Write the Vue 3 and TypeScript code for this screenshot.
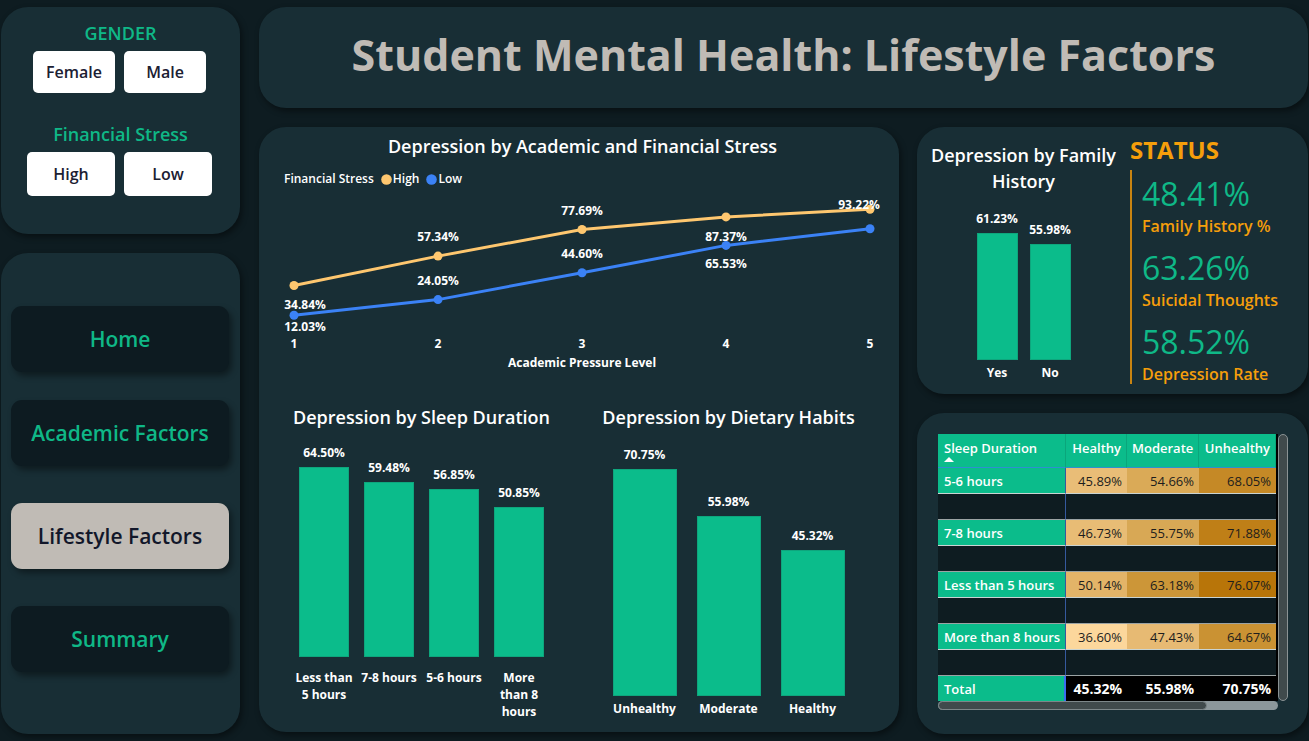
<script setup lang="ts">
interface Bar {
  label: string
  value: number
}

interface Point {
  level: number
  value: number
  label?: string
  dx?: number
  dy?: number
}

interface Series {
  name: string
  color: string
  points: Point[]
}

const genders = ['Female', 'Male']
const stressLevels = ['High', 'Low']

const pages = [
  { name: 'Home', active: false },
  { name: 'Academic Factors', active: false },
  { name: 'Lifestyle Factors', active: true },
  { name: 'Summary', active: false },
]

const series: Series[] = [
  {
    name: 'High',
    color: '#fec76f',
    points: [
      { level: 1, value: 34.84, label: '34.84%', dx: 11, dy: 23 },
      { level: 2, value: 57.34, label: '57.34%', dy: -15 },
      { level: 3, value: 77.69, label: '77.69%', dy: -15 },
      { level: 4, value: 87.37, label: '87.37%', dy: 24 },
      { level: 5, value: 93.22, label: '93.22%', dx: -11, dy: 0 },
    ],
  },
  {
    name: 'Low',
    color: '#3b82f6',
    points: [
      { level: 1, value: 12.03, label: '12.03%', dx: 11, dy: 16 },
      { level: 2, value: 24.05, label: '24.05%', dy: -15 },
      { level: 3, value: 44.6, label: '44.60%', dy: -15 },
      { level: 4, value: 65.53, label: '65.53%', dy: 23 },
      { level: 5, value: 78.3 },
    ],
  },
]

const levels = [1, 2, 3, 4, 5]
const px = (level: number) => 35 + (level - 1) * 144
const py = (value: number) => Math.round((141 - value * 1.306) * 10) / 10
const linePoints = (s: Series) => s.points.map((p) => `${px(p.level)},${py(p.value)}`).join(' ')

const sleep: Bar[] = [
  { label: 'Less than 5 hours', value: 64.5 },
  { label: '7-8 hours', value: 59.48 },
  { label: '5-6 hours', value: 56.85 },
  { label: 'More than 8 hours', value: 50.85 },
]
const diet: Bar[] = [
  { label: 'Unhealthy', value: 70.75 },
  { label: 'Moderate', value: 55.98 },
  { label: 'Healthy', value: 45.32 },
]
const family: Bar[] = [
  { label: 'Yes', value: 61.23 },
  { label: 'No', value: 55.98 },
]

const barHeight = (value: number, scale: number) => ({ height: `${Math.round(value * scale)}px` })
const pct = (value: number) => `${value.toFixed(2)}%`

const status = [
  { value: 48.41, label: 'Family History %' },
  { value: 63.26, label: 'Suicidal Thoughts' },
  { value: 58.52, label: 'Depression Rate' },
]

const rows = [
  { label: '5-6 hours', cells: [45.89, 54.66, 68.05], colors: ['#e9bd77', '#daaa57', '#c58926'] },
  { label: '7-8 hours', cells: [46.73, 55.75, 71.88], colors: ['#e8bc75', '#d8a855', '#bf7f17'] },
  { label: 'Less than 5 hours', cells: [50.14, 63.18, 76.07], colors: ['#e3b468', '#cc9638', '#b87509'] },
  { label: 'More than 8 hours', cells: [36.6, 47.43, 64.67], colors: ['#fcd79c', '#e7ba73', '#ca9233'] },
]
const totals = [45.32, 55.98, 70.75]
</script>

<template>
  <div class="dashboard">
    <aside class="sidebar">
      <section class="card filters">
        <div class="filter" role="group" aria-labelledby="gender-label">
          <h2 id="gender-label">GENDER</h2>
          <div class="options">
            <button v-for="g in genders" :key="g" type="button">{{ g }}</button>
          </div>
        </div>
        <div class="filter wide" role="group" aria-labelledby="stress-label">
          <h2 id="stress-label">Financial Stress</h2>
          <div class="options">
            <button v-for="s in stressLevels" :key="s" type="button">{{ s }}</button>
          </div>
        </div>
      </section>
      <nav class="card nav">
        <a v-for="p in pages" :key="p.name" href="#" :class="{ active: p.active }">{{ p.name }}</a>
      </nav>
    </aside>

    <main class="content">
      <header class="card banner">
        <h1>Student Mental Health: Lifestyle Factors</h1>
      </header>

      <div class="panels">
        <section class="card charts">
          <h3>Depression by Academic and Financial Stress</h3>
          <div class="legend">
            <span class="legend-title">Financial Stress</span>
            <span v-for="s in series" :key="s.name" class="legend-item">
              <svg width="11" height="11" viewBox="0 0 11 11">
                <circle cx="5.5" cy="5.5" r="5.3" :fill="s.color" />
              </svg>
              {{ s.name }}
            </span>
          </div>
          <svg class="line-chart" viewBox="0 0 640 184">
            <g v-for="s in series" :key="s.name">
              <polyline :points="linePoints(s)" fill="none" :stroke="s.color" stroke-width="3" stroke-linejoin="round" />
              <circle v-for="p in s.points" :key="p.level" :cx="px(p.level)" :cy="py(p.value)" r="4.5" :fill="s.color" />
            </g>
            <g v-for="s in series" :key="s.name">
              <template v-for="p in s.points" :key="p.level">
                <text v-if="p.label" :x="px(p.level) + (p.dx ?? 0)" :y="py(p.value) + (p.dy ?? 0)">{{ p.label }}</text>
              </template>
            </g>
            <text v-for="l in levels" :key="l" :x="px(l)" y="158">{{ l }}</text>
            <text x="323" y="177">Academic Pressure Level</text>
          </svg>

          <div class="bar-row">
            <figure class="sleep">
              <figcaption>Depression by Sleep Duration</figcaption>
              <div class="bars">
                <div v-for="b in sleep" :key="b.label" class="bar-col">
                  <span class="value">{{ pct(b.value) }}</span>
                  <div class="bar" :style="barHeight(b.value, 2.947)"></div>
                  <span class="category">{{ b.label }}</span>
                </div>
              </div>
            </figure>
            <figure class="diet">
              <figcaption>Depression by Dietary Habits</figcaption>
              <div class="bars">
                <div v-for="b in diet" :key="b.label" class="bar-col">
                  <span class="value">{{ pct(b.value) }}</span>
                  <div class="bar" :style="barHeight(b.value, 3.215)"></div>
                  <span class="category">{{ b.label }}</span>
                </div>
              </div>
            </figure>
          </div>
        </section>

        <div class="right">
          <section class="card summary">
            <figure class="family">
              <figcaption>Depression by Family History</figcaption>
              <div class="bars">
                <div v-for="b in family" :key="b.label" class="bar-col">
                  <span class="value">{{ pct(b.value) }}</span>
                  <div class="bar" :style="barHeight(b.value, 2.07)"></div>
                  <span class="category">{{ b.label }}</span>
                </div>
              </div>
            </figure>
            <div class="status">
              <h2>STATUS</h2>
              <dl>
                <div v-for="k in status" :key="k.label" class="kpi">
                  <dd>{{ pct(k.value) }}</dd>
                  <dt>{{ k.label }}</dt>
                </div>
              </dl>
            </div>
          </section>

          <section class="card matrix">
            <div class="matrix-grid">
              <table>
                <colgroup>
                  <col class="c-label" />
                  <col class="c-healthy" />
                  <col class="c-moderate" />
                  <col />
                </colgroup>
                <thead>
                  <tr>
                    <th scope="col">
                      Sleep Duration
                      <svg width="10" height="5" viewBox="0 0 10 5"><path d="M0 5L5 0L10 5Z" fill="#fff" /></svg>
                    </th>
                    <th scope="col">Healthy</th>
                    <th scope="col">Moderate</th>
                    <th scope="col">Unhealthy</th>
                  </tr>
                </thead>
                <tbody>
                  <template v-for="r in rows" :key="r.label">
                    <tr class="data">
                      <th scope="row">{{ r.label }}</th>
                      <td v-for="(c, i) in r.cells" :key="i" :style="{ backgroundColor: r.colors[i] }">{{ pct(c) }}</td>
                    </tr>
                    <tr class="blank">
                      <td></td>
                      <td colspan="3"></td>
                    </tr>
                  </template>
                </tbody>
                <tfoot>
                  <tr>
                    <th scope="row">Total</th>
                    <td v-for="t in totals" :key="t">{{ pct(t) }}</td>
                  </tr>
                </tfoot>
              </table>
              <div class="scroll-y"></div>
              <div class="scroll-x"><div class="thumb"></div></div>
            </div>
          </section>
        </div>
      </div>
    </main>
  </div>
</template>

<style>
html,
body {
  margin: 0;
  background: #0e1c21;
}
</style>

<style scoped>
.dashboard {
  box-sizing: border-box;
  min-height: 100vh;
  padding: 7px 1px;
  display: grid;
  grid-template-columns: 239px 1fr;
  gap: 19px;
  background: #0e1c21;
  font-family: 'Open Sans', 'Noto Sans', sans-serif;
  color: #fff;
}
.dashboard * {
  box-sizing: border-box;
}
h1,
h2,
h3,
figure,
dl,
dd {
  margin: 0;
}
.card {
  background: #182e35;
  border-radius: 27px;
  box-shadow: 2px 3px 6px rgba(0, 0, 0, 0.45);
}

/* Sidebar */
.sidebar {
  display: flex;
  flex-direction: column;
  gap: 19px;
}
.filters {
  height: 227px;
  padding-top: 14px;
  display: flex;
  flex-direction: column;
  gap: 29px;
}
.filter h2 {
  font-size: 18px;
  line-height: 24px;
  font-weight: 600;
  color: #0fb887;
  text-align: center;
  margin-bottom: 6px;
}
.options {
  display: flex;
  justify-content: center;
  gap: 9px;
  padding-right: 2px;
}
.options button {
  width: 82px;
  height: 42px;
  padding: 0;
  border: 0;
  border-radius: 5px;
  background: #fff;
  color: #1b2032;
  font: 600 16px 'Open Sans', 'Noto Sans', sans-serif;
}
.wide .options button {
  width: 88px;
  height: 44px;
}
.nav {
  flex: 1;
  padding: 53px 11px 20px 10px;
  display: flex;
  flex-direction: column;
  gap: 28px;
}
.nav a {
  height: 66px;
  display: flex;
  align-items: center;
  justify-content: center;
  border-radius: 11px;
  background: #0d1b21;
  box-shadow: 3px 4px 6px rgba(0, 0, 0, 0.4);
  color: #0fb887;
  font-size: 21px;
  font-weight: 600;
  text-decoration: none;
}
.nav a.active {
  margin: 9px 0;
  background: #c0bbb5;
  color: #12172a;
}

/* Main area */
.content {
  min-width: 0;
  display: flex;
  flex-direction: column;
  gap: 19px;
}
.banner {
  height: 101px;
  padding-bottom: 5px;
  display: flex;
  align-items: center;
  justify-content: center;
}
.banner h1 {
  font-size: 43px;
  line-height: 60px;
  font-weight: 700;
  color: #c0bbb5;
  white-space: nowrap;
}
.panels {
  flex: 1;
  display: grid;
  grid-template-columns: 640fr 391fr;
  gap: 18px;
}
.charts {
  margin-bottom: 2px;
  padding-top: 6px;
}
.charts h3,
figcaption {
  font-size: 18px;
  line-height: 26px;
  font-weight: 600;
  text-align: center;
}
.charts h3 {
  padding-left: 7px;
}
.legend {
  display: flex;
  align-items: center;
  gap: 7px;
  margin: 11px 0 0 25px;
  font-size: 12px;
  line-height: 18px;
  font-weight: 600;
}
.legend-item {
  display: flex;
  align-items: center;
  gap: 1px;
}
.line-chart {
  display: block;
  width: 100%;
  margin-top: 2px;
}
.line-chart text {
  fill: #fff;
  font-size: 12px;
  font-weight: 700;
  text-anchor: middle;
}
.bar-row {
  display: grid;
  grid-template-columns: 1fr 1fr;
  padding: 30px 17px 0 9px;
}
.bars {
  display: flex;
  align-items: flex-end;
  justify-content: center;
}
.bar-col {
  display: flex;
  flex-direction: column;
  align-items: center;
  text-align: center;
  font-size: 12px;
  line-height: 17px;
  font-weight: 700;
}
.bar {
  margin-top: 6px;
  background: #0bbc8b;
  border: 1px solid #0ea67d;
}
.sleep .bars {
  height: 290px;
}
.sleep .bar-col {
  width: 65px;
}
.sleep .bar {
  width: 50px;
}
.sleep .category {
  height: 63px;
  padding: 12px 3px 0;
}
.diet .bars {
  height: 287px;
}
.diet .bar-col {
  width: 84px;
}
.diet .bar {
  width: 64px;
}
.diet .category {
  padding-top: 4px;
}

.right {
  min-width: 0;
  display: flex;
  flex-direction: column;
  gap: 19px;
}
.summary {
  height: 267px;
  display: grid;
  grid-template-columns: 213fr 178fr;
}
.family {
  padding-top: 15px;
}
.family figcaption {
  padding: 0 10px;
}
.family .bars {
  height: 187px;
}
.family .bar-col {
  width: 53px;
}
.family .bar {
  width: 41px;
}
.family .category {
  padding-top: 4px;
}
.status {
  padding-top: 7px;
}
.status h2 {
  font-size: 24px;
  line-height: 32px;
  font-weight: 700;
  color: #f59e0b;
}
.status dl {
  margin-top: 4px;
  height: 214px;
  padding-left: 10px;
  border-left: 2px solid #c98411;
}
.kpi {
  height: 74px;
  display: flex;
  flex-direction: column;
}
.kpi dd {
  font-size: 32px;
  line-height: 47px;
  font-weight: 500;
  color: #0fb887;
}
.kpi dt {
  font-size: 16px;
  line-height: 18px;
  font-weight: 600;
  color: #f59e0b;
}

/* Matrix */
.matrix {
  flex: 1;
  padding: 21px 20px 24px 21px;
}
.matrix-grid {
  display: grid;
  grid-template-columns: 1fr 10px;
}
table {
  width: 100%;
  border-collapse: separate;
  border-spacing: 0;
  table-layout: fixed;
  background: #0e1c21;
  border-right: 2px solid #000;
  font-size: 13px;
  line-height: 18px;
}
.c-label {
  width: 128px;
}
.c-healthy {
  width: 61px;
}
.c-moderate {
  width: 72px;
}
th,
td {
  padding: 0 5px;
  font-weight: 600;
  text-align: right;
  white-space: nowrap;
}
thead th {
  height: 34px;
  padding-top: 5px;
  vertical-align: top;
  background: #0bbc8b;
  border-right: 1px solid #0aa67b;
  border-bottom: 1px solid #2e8fd0;
}
th:first-child {
  padding-left: 6px;
  text-align: left;
}
thead svg {
  display: block;
}
.data th,
.data td {
  height: 26px;
  border-bottom: 1px solid #c9d3d2;
}
.data th,
tfoot th {
  background: #0bbc8b;
}
.data td {
  color: #1d1d1d;
  font-weight: 400;
}
.blank td {
  height: 26px;
  border-bottom: 1px solid #9ba3a4;
}
tbody tr > :first-child {
  border-right: 1px solid #35599e;
}
tfoot th,
tfoot td {
  height: 25px;
}
tfoot td {
  background: #000;
  font-size: 14px;
  font-weight: 700;
}
tfoot th {
  border-right: 2px solid #3b6df0;
}
.scroll-y {
  border: 1px solid #8a9294;
  border-radius: 5px;
  background: #404a4c;
}
.scroll-x {
  height: 9px;
  border-radius: 5px;
  background: #8c979b;
}
.scroll-x .thumb {
  width: 79%;
  height: 9px;
  border: 1px solid #7d878a;
  border-radius: 5px;
  background: #404a4c;
}
</style>
